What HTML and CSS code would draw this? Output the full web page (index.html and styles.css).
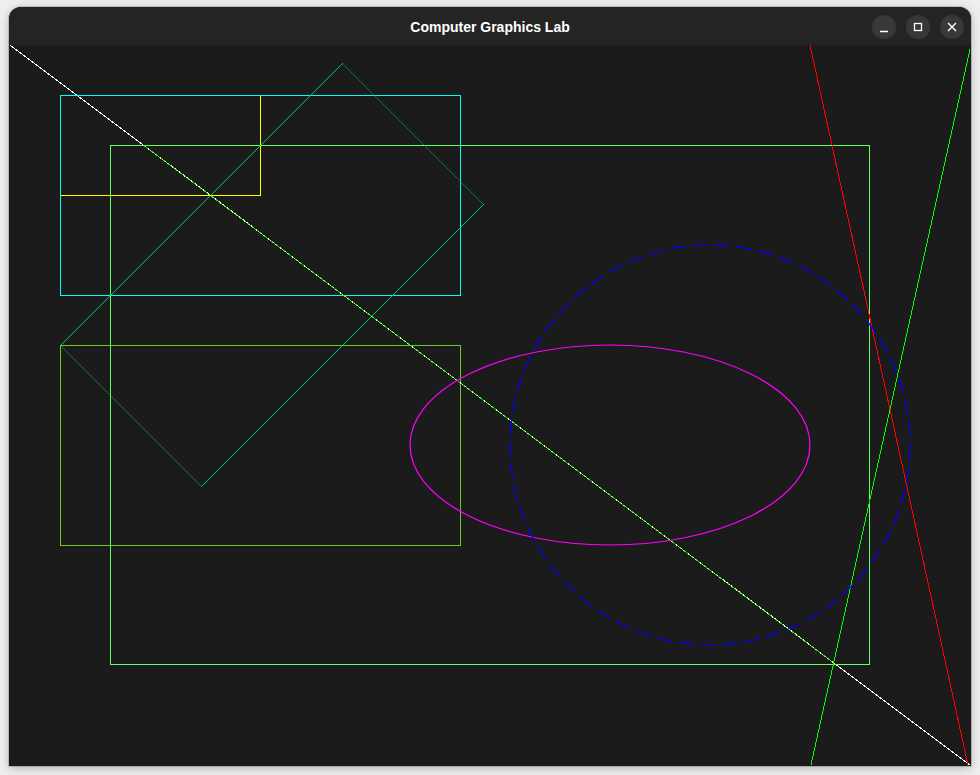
FILE: index.html
```html
<!DOCTYPE html>
<html>
<head>
<meta charset="utf-8">
<link rel="stylesheet" href="styles.css">
<title>Computer Graphics Lab</title>
</head>
<body>
<div class="window">
  <div class="titlebar">
    <div class="title">Computer Graphics Lab</div>
    <div class="controls">
      <div class="btn"><svg width="24" height="24" viewBox="0 0 24 24"><path d="M8 16.5h8" stroke="#fff" stroke-width="1.3" fill="none"/></svg></div>
      <div class="btn"><svg width="24" height="24" viewBox="0 0 24 24"><rect x="8.5" y="8.5" width="7" height="7" stroke="#fff" stroke-width="1.3" fill="none"/></svg></div>
      <div class="btn"><svg width="24" height="24" viewBox="0 0 24 24"><path d="M8 8l8 8M16 8l-8 8" stroke="#fff" stroke-width="1.4" fill="none"/></svg></div>
    </div>
  </div>
  <svg class="canvas" width="960" height="720" viewBox="0 0 960 720">
    <g shape-rendering="crispEdges" fill="none" stroke-width="1">
      <line x1="0" y1="0" x2="960" y2="720" stroke="#ffffff"/>
      <rect x="50.5" y="50.5" width="200" height="100" stroke="#ffff00"/>
      <rect x="50.5" y="50.5" width="400" height="200" stroke="#00ffff"/>
      <rect x="100.5" y="100.5" width="759" height="519" stroke="#66ff66"/>
      <rect x="50.5" y="300.5" width="400" height="200" stroke="#66cc22"/>
      <line x1="51" y1="300" x2="333" y2="18" stroke="#00c864"/>
      <line x1="333.5" y1="18.5" x2="474.5" y2="159.5" stroke="#00c864" stroke-width="0.5"/>
      <line x1="474" y1="159" x2="192" y2="441" stroke="#00c864"/>
      <line x1="192.5" y1="441.5" x2="51.5" y2="300.5" stroke="#00c864" stroke-width="0.5"/>
      <line x1="133.3" y1="100" x2="825.3" y2="619" stroke="#22ee22"/>
      <line x1="133.3" y1="100" x2="825.3" y2="619" stroke="#eeff88" stroke-dasharray="1 2"/>
      <line x1="800" y1="0" x2="958" y2="720" stroke="#ff0000"/>
      <line x1="961" y1="0" x2="801" y2="720" stroke="#00ff00"/>
    </g>
    <g fill="none" stroke-width="1.2">
      <ellipse cx="600" cy="400" rx="200" ry="100" stroke="#ff00ff"/>
      <circle cx="700" cy="400" r="200" stroke="#0000ff" stroke-dasharray="16 6"/>
    </g>
  </svg>
</div>
</body>
</html>
```
FILE: styles.css
```css
html, body {
  margin: 0;
  padding: 0;
}
body {
  background: #eeeeee;
  width: 980px;
  height: 775px;
  overflow: hidden;
  padding: 7px 0 0 9px;
  box-sizing: border-box;
  font-family: "Liberation Sans", "DejaVu Sans", sans-serif;
}
.window {
  width: 962px;
  background: #1b1b1b;
  border-radius: 12px 12px 0 0;
  box-shadow: 0 2px 10px rgba(0, 0, 0, 0.25), 0 0 0 1px rgba(0, 0, 0, 0.15);
  display: flex;
  flex-direction: column;
  overflow: hidden;
}
.titlebar {
  height: 38px;
  background: #242424;
  display: flex;
  align-items: center;
  justify-content: center;
  position: relative;
}
.title {
  color: #ffffff;
  font-weight: bold;
  font-size: 14px;
  padding-top: 2px;
}
.controls {
  position: absolute;
  right: 7px;
  top: 8px;
  display: flex;
  gap: 10px;
}
.btn {
  width: 24px;
  height: 24px;
  border-radius: 50%;
  background: #383838;
}
.btn svg {
  display: block;
}
.canvas {
  display: block;
  margin: 0 1px 1px 1px;
  background: #1b1b1b;
}
```
